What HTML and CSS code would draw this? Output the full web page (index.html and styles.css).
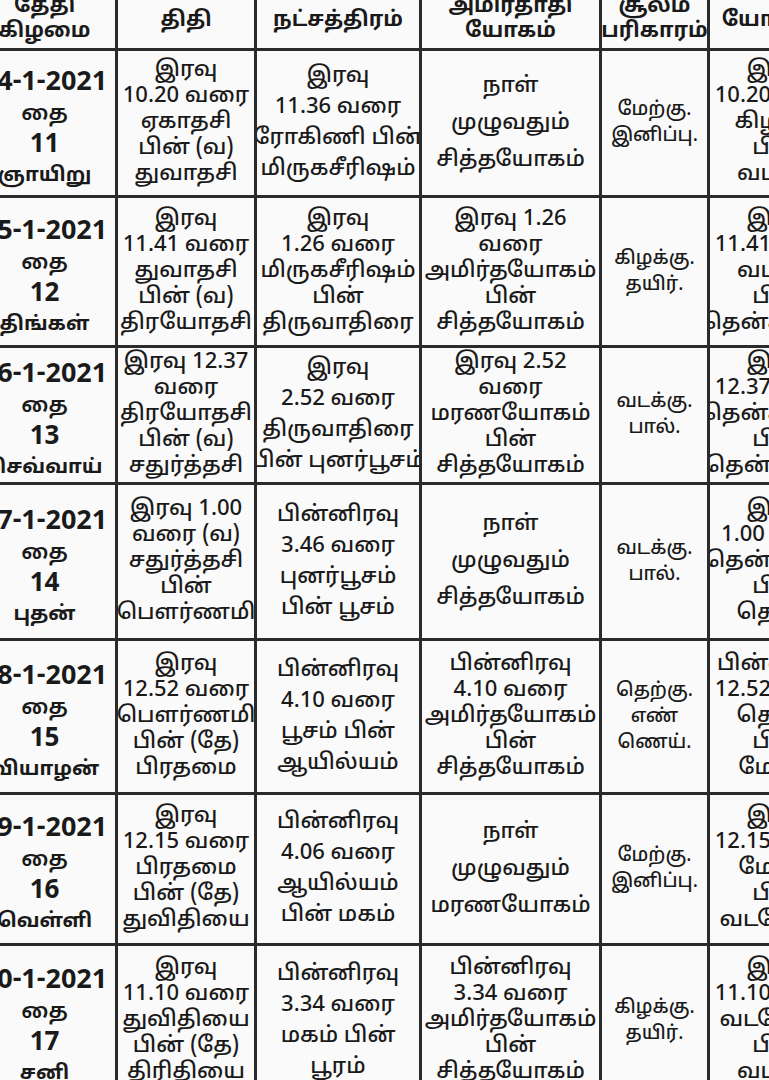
FILE: index.html
```html
<!DOCTYPE html>
<html lang="ta">
<head>
<meta charset="utf-8">
<title>தை மாத பஞ்சாங்கம்</title>
<link rel="stylesheet" href="styles.css">
</head>
<body>
<div class="page">
  <div class="grid">
    <div class="cell head"><span>தேதி</span><span>கிழமை</span></div>
    <div class="cell head one"><span>திதி</span></div>
    <div class="cell head one"><span>நட்சத்திரம்</span></div>
    <div class="cell head"><span>அமிர்தாதி</span><span>யோகம்</span></div>
    <div class="cell head"><span>சூலம்</span><span>பரிகாரம்</span></div>
    <div class="cell head one"><span>யோகினி</span></div>

    <div class="cell date"><span class="b">14-1-2021</span><span>தை</span><span class="n">11</span><span class="day">ஞாயிறு</span></div>
    <div class="cell"><span>இரவு</span><span>10.20 வரை</span><span>ஏகாதசி</span><span>பின் (வ)</span><span>துவாதசி</span></div>
    <div class="cell"><span>இரவு</span><span>11.36 வரை</span><span>ரோகிணி பின்</span><span>மிருகசீரிஷம்</span></div>
    <div class="cell"><span>நாள்</span><span>முழுவதும்</span><span>சித்தயோகம்</span></div>
    <div class="cell small"><span>மேற்கு.</span><span>இனிப்பு.</span></div>
    <div class="cell"><span>இரவு</span><span>10.20 வரை</span><span>கிழக்கு</span><span>பின்</span><span>வடக்கு</span></div>

    <div class="cell date"><span class="b">15-1-2021</span><span>தை</span><span class="n">12</span><span class="day">திங்கள்</span></div>
    <div class="cell"><span>இரவு</span><span>11.41 வரை</span><span>துவாதசி</span><span>பின் (வ)</span><span>திரயோதசி</span></div>
    <div class="cell"><span>இரவு</span><span>1.26 வரை</span><span>மிருகசீரிஷம்</span><span>பின்</span><span>திருவாதிரை</span></div>
    <div class="cell"><span>இரவு 1.26</span><span>வரை</span><span>அமிர்தயோகம்</span><span>பின்</span><span>சித்தயோகம்</span></div>
    <div class="cell small"><span>கிழக்கு.</span><span>தயிர்.</span></div>
    <div class="cell"><span>இரவு</span><span>11.41 வரை</span><span>வடக்கு</span><span>பின்</span><span>தென்கிழக்கு</span></div>

    <div class="cell date"><span class="b">16-1-2021</span><span>தை</span><span class="n">13</span><span class="day">செவ்வாய்</span></div>
    <div class="cell"><span>இரவு 12.37</span><span>வரை</span><span>திரயோதசி</span><span>பின் (வ)</span><span>சதுர்த்தசி</span></div>
    <div class="cell"><span>இரவு</span><span>2.52 வரை</span><span>திருவாதிரை</span><span>பின் புனர்பூசம்</span></div>
    <div class="cell"><span>இரவு 2.52</span><span>வரை</span><span>மரணயோகம்</span><span>பின்</span><span>சித்தயோகம்</span></div>
    <div class="cell small"><span>வடக்கு.</span><span>பால்.</span></div>
    <div class="cell"><span>இரவு</span><span>12.37 வரை</span><span>தென்கிழக்கு</span><span>பின்</span><span>தென்மேற்கு</span></div>

    <div class="cell date"><span class="b">17-1-2021</span><span>தை</span><span class="n">14</span><span class="day">புதன்</span></div>
    <div class="cell"><span>இரவு 1.00</span><span>வரை (வ)</span><span>சதுர்த்தசி</span><span>பின்</span><span>பௌர்ணமி</span></div>
    <div class="cell"><span>பின்னிரவு</span><span>3.46 வரை</span><span>புனர்பூசம்</span><span>பின் பூசம்</span></div>
    <div class="cell"><span>நாள்</span><span>முழுவதும்</span><span>சித்தயோகம்</span></div>
    <div class="cell small"><span>வடக்கு.</span><span>பால்.</span></div>
    <div class="cell"><span>இரவு</span><span>1.00 வரை</span><span>தென்மேற்கு</span><span>பின்</span><span>தெற்கு</span></div>

    <div class="cell date"><span class="b">18-1-2021</span><span>தை</span><span class="n">15</span><span class="day">வியாழன்</span></div>
    <div class="cell"><span>இரவு</span><span>12.52 வரை</span><span>பௌர்ணமி</span><span>பின் (தே)</span><span>பிரதமை</span></div>
    <div class="cell"><span>பின்னிரவு</span><span>4.10 வரை</span><span>பூசம் பின்</span><span>ஆயில்யம்</span></div>
    <div class="cell"><span>பின்னிரவு</span><span>4.10 வரை</span><span>அமிர்தயோகம்</span><span>பின்</span><span>சித்தயோகம்</span></div>
    <div class="cell small"><span>தெற்கு.</span><span>எண்</span><span>ணெய்.</span></div>
    <div class="cell"><span>பின்னிரவு</span><span>12.52 வரை</span><span>தெற்கு</span><span>பின்</span><span>மேற்கு</span></div>

    <div class="cell date"><span class="b">19-1-2021</span><span>தை</span><span class="n">16</span><span class="day">வெள்ளி</span></div>
    <div class="cell"><span>இரவு</span><span>12.15 வரை</span><span>பிரதமை</span><span>பின் (தே)</span><span>துவிதியை</span></div>
    <div class="cell"><span>பின்னிரவு</span><span>4.06 வரை</span><span>ஆயில்யம்</span><span>பின் மகம்</span></div>
    <div class="cell"><span>நாள்</span><span>முழுவதும்</span><span>மரணயோகம்</span></div>
    <div class="cell small"><span>மேற்கு.</span><span>இனிப்பு.</span></div>
    <div class="cell"><span>இரவு</span><span>12.15 வரை</span><span>மேற்கு</span><span>பின்</span><span>வடமேற்கு</span></div>

    <div class="cell date"><span class="b">20-1-2021</span><span>தை</span><span class="n">17</span><span class="day">சனி</span></div>
    <div class="cell"><span>இரவு</span><span>11.10 வரை</span><span>துவிதியை</span><span>பின் (தே)</span><span>திரிதியை</span></div>
    <div class="cell"><span>பின்னிரவு</span><span>3.34 வரை</span><span>மகம் பின்</span><span>பூரம்</span></div>
    <div class="cell"><span>பின்னிரவு</span><span>3.34 வரை</span><span>அமிர்தயோகம்</span><span>பின்</span><span>சித்தயோகம்</span></div>
    <div class="cell small"><span>கிழக்கு.</span><span>தயிர்.</span></div>
    <div class="cell"><span>இரவு</span><span>11.10 வரை</span><span>வடமேற்கு</span><span>பின்</span><span>வடக்கு</span></div>
  </div>
</div>
</body>
</html>
```
FILE: styles.css
```css
html, body {
  margin: 0;
  padding: 0;
  background: #ffffff;
}
.page {
  width: 769px;
  height: 1080px;
  overflow: hidden;
  background: #fafafa;
}
.grid {
  display: grid;
  grid-template-columns: 141px 136px 162px 177px 105px 136px;
  grid-template-rows: 57px 144px 147px 134px 153px 151px 148px 150px;
  gap: 3px;
  background: #2b2b2b;
  width: max-content;
  margin: -9px 0 0 -26px;
  font-family: "Noto Sans Tamil", "Lohit Tamil", "Noto Sans", "Liberation Sans", sans-serif;
  color: #1a1a1a;
}
.cell {
  background: #fafafa;
  display: flex;
  flex-direction: column;
  align-items: center;
  justify-content: center;
  text-align: center;
  font-size: 22px;
  font-weight: 500;
  line-height: 37px;
  white-space: nowrap;
  overflow: hidden;
}
.cell:has(> span:nth-child(4)) {
  line-height: 31px;
}
.cell:has(> span:nth-child(5)) {
  line-height: 26px;
}
.head {
  font-weight: 700;
  font-size: 21px;
  line-height: 25px;
}
.head.one {
  padding-top: 4px;
}
.date {
  padding-top: 14px;
}
.cell.date {
  line-height: 32px;
}
.date span {
  font-weight: 600;
}
.date .b {
  font-weight: 700;
  font-size: 27px;
}
.date .n {
  font-weight: 700;
  font-size: 26px;
}
.date .day {
  font-weight: 700;
  font-size: 20px;
}
.cell.small {
  font-size: 19px;
  line-height: 26px;
}
```
